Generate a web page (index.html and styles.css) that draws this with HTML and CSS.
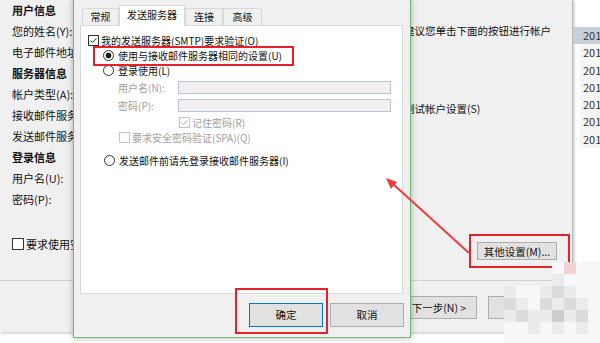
FILE: index.html
```html
<!DOCTYPE html>
<html lang="zh-CN">
  <head>
    <meta charset="UTF-8" />
    <title>帐户设置</title>
    <link rel="stylesheet" href="styles.css">
  </head>
  <body>
    <div class="screen">
      <!-- Account settings window (behind) -->
      <div class="account-window">
        <div class="account-body">
          <div class="info-col">
            <div class="row head">用户信息</div>
            <div class="row">您的姓名(Y):</div>
            <div class="row">电子邮件地址(E):</div>
            <div class="row head">服务器信息</div>
            <div class="row">帐户类型(A):</div>
            <div class="row">接收邮件服务器(I):</div>
            <div class="row">发送邮件服务器(SMTP)(O):</div>
            <div class="row head">登录信息</div>
            <div class="row">用户名(U):</div>
            <div class="row">密码(P):</div>
            <div class="check-row"><span class="box"></span>要求使用安全密码验证(SPA)进行登录(Q)</div>
          </div>
          <div class="test-col">
            <p class="hint">建议您单击下面的按钮进行帐户</p>
            <p class="test-link">测试帐户设置(S)</p>
            <button class="btn more-btn">其他设置(M)...</button>
          </div>
        </div>
        <div class="account-footer">
          <button class="btn">下一步(N) &gt;</button>
          <button class="btn">取消</button>
        </div>
      </div>

      <ul class="file-list">
        <li class="selected">2019/3/12</li>
        <li>2019/3/12</li>
        <li>2019/3/11</li>
        <li>2019/3/11</li>
        <li>2019/3/10</li>
        <li>2019/3/09</li>
        <li>2019/3/08</li>
      </ul>

      <!-- Outgoing server dialog (front) -->
      <div class="send-dialog">
        <div class="tabs">
          <div class="tab w37">常规</div>
          <div class="tab active w66">发送服务器</div>
          <div class="tab w38">连接</div>
          <div class="tab w39">高级</div>
        </div>
        <div class="tab-panel">
          <div class="opt smtp">
            <span class="check on"><svg viewBox="0 0 11 11"><path d="M2 5.5l2.3 2.4 4.6-5" /></svg></span>
            我的发送服务器(SMTP)要求验证(O)
          </div>
          <div class="opt radio-row">
            <span class="radio on"></span>使用与接收邮件服务器相同的设置(U)
          </div>
          <div class="opt radio-row">
            <span class="radio"></span>登录使用(L)
          </div>
          <div class="opt field first-field">
            <span class="field-label">用户名(N):</span>
            <span class="input"></span>
          </div>
          <div class="opt field second-field">
            <span class="field-label">密码(P):</span>
            <span class="input"></span>
          </div>
          <div class="opt disabled remember">
            <span class="check off on"><svg viewBox="0 0 11 11"><path d="M2 5.5l2.3 2.4 4.6-5" /></svg></span>
            记住密码(R)
          </div>
          <div class="opt disabled spa">
            <span class="check off"></span>要求安全密码验证(SPA)(Q)
          </div>
          <div class="opt radio-row last">
            <span class="radio"></span>发送邮件前请先登录接收邮件服务器(I)
          </div>
        </div>
        <div class="dialog-buttons">
          <button class="btn default">确定</button>
          <button class="btn">取消</button>
        </div>
      </div>

      <!-- annotations -->
      <div class="mark mark-same"></div>
      <div class="mark mark-ok"></div>
      <div class="mark mark-more"></div>
      <svg class="arrow" width="600" height="343" viewBox="0 0 600 343">
        <line x1="469" y1="253" x2="393" y2="184" />
        <polygon points="386,178 391,189 397,182" />
      </svg>

      <div class="mosaic">
        <i class="m0"></i><i class="m0"></i><i class="m0"></i><i class="m0"></i><i class="m1"></i><i class="m5"></i><i class="m1"></i><i class="m1"></i>
        <i class="m0"></i><i class="m0"></i><i class="m0"></i><i class="m0"></i><i class="m2"></i><i class="m1"></i><i class="m1"></i><i class="m1"></i>
        <i class="m2"></i><i class="m1"></i><i class="m1"></i><i class="m2"></i><i class="m3"></i><i class="m2"></i><i class="m1"></i><i class="m1"></i>
        <i class="m3"></i><i class="m2"></i><i class="m1"></i><i class="m3"></i><i class="m2"></i><i class="m3"></i><i class="m2"></i><i class="m1"></i>
        <i class="m2"></i><i class="m3"></i><i class="m2"></i><i class="m2"></i><i class="m4"></i><i class="m2"></i><i class="m3"></i><i class="m1"></i>
        <i class="m1"></i><i class="m1"></i><i class="m2"></i><i class="m1"></i><i class="m2"></i><i class="m1"></i><i class="m2"></i><i class="m1"></i>
        <i class="m1"></i><i class="m1"></i><i class="m1"></i><i class="m1"></i><i class="m1"></i><i class="m1"></i><i class="m1"></i><i class="m1"></i>
      </div>
    </div>
  </body>
</html>
```

FILE: styles.css
```css
* {
  box-sizing: border-box;
  margin: 0;
  padding: 0;
}
body {
  width: 600px;
  height: 343px;
  overflow: hidden;
  background: #fff;
  font-family: "Noto Sans CJK SC", "Noto Sans", sans-serif;
  font-size: 11px;
  color: #111;
}
.screen {
  position: relative;
  display: flex;
  width: 600px;
  height: 343px;
}
.btn {
  font-family: "Noto Sans CJK SC", "Noto Sans", sans-serif;
  font-size: 10.5px;
  color: #111;
  background: #e1e1e1;
  border: 1px solid #adadad;
  height: 23px;
  width: 76px;
  line-height: 20px;
}

/* back window */
.account-window {
  flex-shrink: 0;
  width: 573px;
  height: 332px;
  background: #f0f0f0;
  border-right: 1px solid #b8b8b8;
  box-shadow: 1px 1px 3px rgba(0, 0, 0, 0.25);
  display: flex;
  flex-direction: column;
}
.account-body {
  display: flex;
  height: 280px;
}
.info-col {
  width: 395px;
  padding-left: 12px;
  white-space: nowrap;
}
.info-col .row {
  line-height: 21px;
  height: 21px;
}
.info-col .head {
  font-weight: bold;
}
.check-row {
  display: flex;
  align-items: center;
  height: 14px;
  margin-top: 27px;
}
.check-row .box {
  width: 12px;
  height: 12px;
  border: 1px solid #333;
  background: #fff;
  margin-right: 2px;
}
.test-col {
  flex: 1;
  display: flex;
  flex-direction: column;
  align-items: flex-start;
  padding-left: 9px;
  font-size: 10.5px;
  white-space: nowrap;
}
.hint {
  line-height: 14px;
  margin-top: 24px;
}
.test-link {
  line-height: 14px;
  margin-top: 64px;
}
.more-btn {
  width: 80px;
  height: 18px;
  line-height: 15px;
  margin-top: 126px;
  margin-left: 73px;
}
.account-footer {
  flex: 1;
  border-top: 1px solid #d2d2d2;
  display: flex;
  justify-content: flex-end;
  align-items: flex-start;
  gap: 11px;
  padding: 15px 8px 0 0;
}

/* right list */
.file-list {
  list-style: none;
  flex: 1;
  padding-top: 27px;
  overflow: hidden;
  white-space: nowrap;
}
.file-list li {
  height: 17.3px;
  line-height: 17px;
  margin-left: 7px;
  padding-left: 3px;
  background: #f5f5f5;
  color: #333;
}
.file-list li.selected {
  margin-left: 0;
  padding-left: 10px;
  background: #c7cfd9;
}

/* front dialog */
.send-dialog {
  position: absolute;
  left: 73px;
  top: -1px;
  width: 338px;
  height: 339px;
  background: #f0f0f0;
  border: 1px solid #72b874;
  box-shadow: 0 0 6px rgba(0, 0, 0, 0.3);
  padding: 6px 0 0 6px;
  font-size: 10px;
  white-space: nowrap;
}
.tabs {
  display: flex;
  align-items: flex-end;
  height: 19px;
  padding-left: 2px;
}
.tab {
  height: 17px;
  line-height: 15px;
  text-align: center;
  border: 1px solid #d9d9d9;
  border-bottom: none;
  background: #f0f0f0;
}
.tab.active {
  position: relative;
  z-index: 1;
  height: 21px;
  line-height: 17px;
  margin-bottom: -1px;
  background: #fff;
}
.w37 { width: 37px; }
.w38 { width: 38px; }
.w39 { width: 39px; }
.w66 { width: 66px; }
.tab-panel {
  width: 323px;
  height: 269px;
  background: #fff;
  border: 1px solid #d9d9d9;
  padding-top: 7px;
}
.opt {
  display: flex;
  align-items: center;
  height: 15px;
}
.opt.smtp { padding-left: 7px; }
.opt.radio-row { padding-left: 22px; }
.opt.field { padding-left: 37px; color: #a0a0a0; }
.opt.first-field { margin-top: 2px; }
.opt.second-field { margin-top: 3px; }
.opt.remember { padding-left: 98px; margin-top: 2px; }
.opt.spa { padding-left: 38px; }
.opt.last { margin-top: 8px; padding-left: 23px; }
.opt.disabled { color: #a0a0a0; }
.check {
  width: 11px;
  height: 11px;
  border: 1px solid #333;
  background: #fff;
  margin-right: 2px;
}
.check svg {
  display: block;
  width: 9px;
  height: 9px;
}
.check path {
  fill: none;
  stroke: #222;
  stroke-width: 1.2;
}
.check.off {
  border-color: #c4c4c4;
}
.check.off path {
  stroke: #a8a8a8;
}
.radio {
  width: 11px;
  height: 11px;
  border: 1px solid #333;
  border-radius: 50%;
  background: #fff;
  margin-right: 4px;
}
.radio.on {
  background: radial-gradient(circle, #1a1a1a 0 2.6px, #fff 3.2px);
}
.field-label {
  width: 60px;
}
.input {
  width: 213px;
  height: 13px;
  background: #f0f0f0;
  border: 1px solid #b7c5d7;
}
.dialog-buttons {
  display: flex;
  justify-content: flex-end;
  gap: 7px;
  margin-top: 9px;
  padding-right: 6px;
}
.dialog-buttons .btn {
  width: 74px;
  height: 24px;
}
.btn.default {
  border-color: #0078d7;
}

/* annotations */
.mark {
  position: absolute;
  border: 2px solid #e8202a;
}
.mark-same { left: 93px; top: 46px; width: 201px; height: 20px; }
.mark-ok { left: 235px; top: 288px; width: 93px; height: 46px; }
.mark-more { left: 469px; top: 234px; width: 101px; height: 34px; }
.arrow {
  position: absolute;
  left: 0;
  top: 0;
}
.arrow line {
  stroke: #f03c3c;
  stroke-width: 2;
}
.arrow polygon {
  fill: #f03c3c;
}
.mosaic {
  position: absolute;
  left: 504px;
  top: 262px;
  display: grid;
  grid-template-columns: repeat(8, 12px);
  grid-auto-rows: 12px;
}
.mosaic .m1 { background: #f7f7f7; }
.mosaic .m2 { background: #ebebeb; }
.mosaic .m3 { background: #dcdcdc; }
.mosaic .m4 { background: #cdcdcd; }
.mosaic .m5 { background: #f2d2d2; }
```
